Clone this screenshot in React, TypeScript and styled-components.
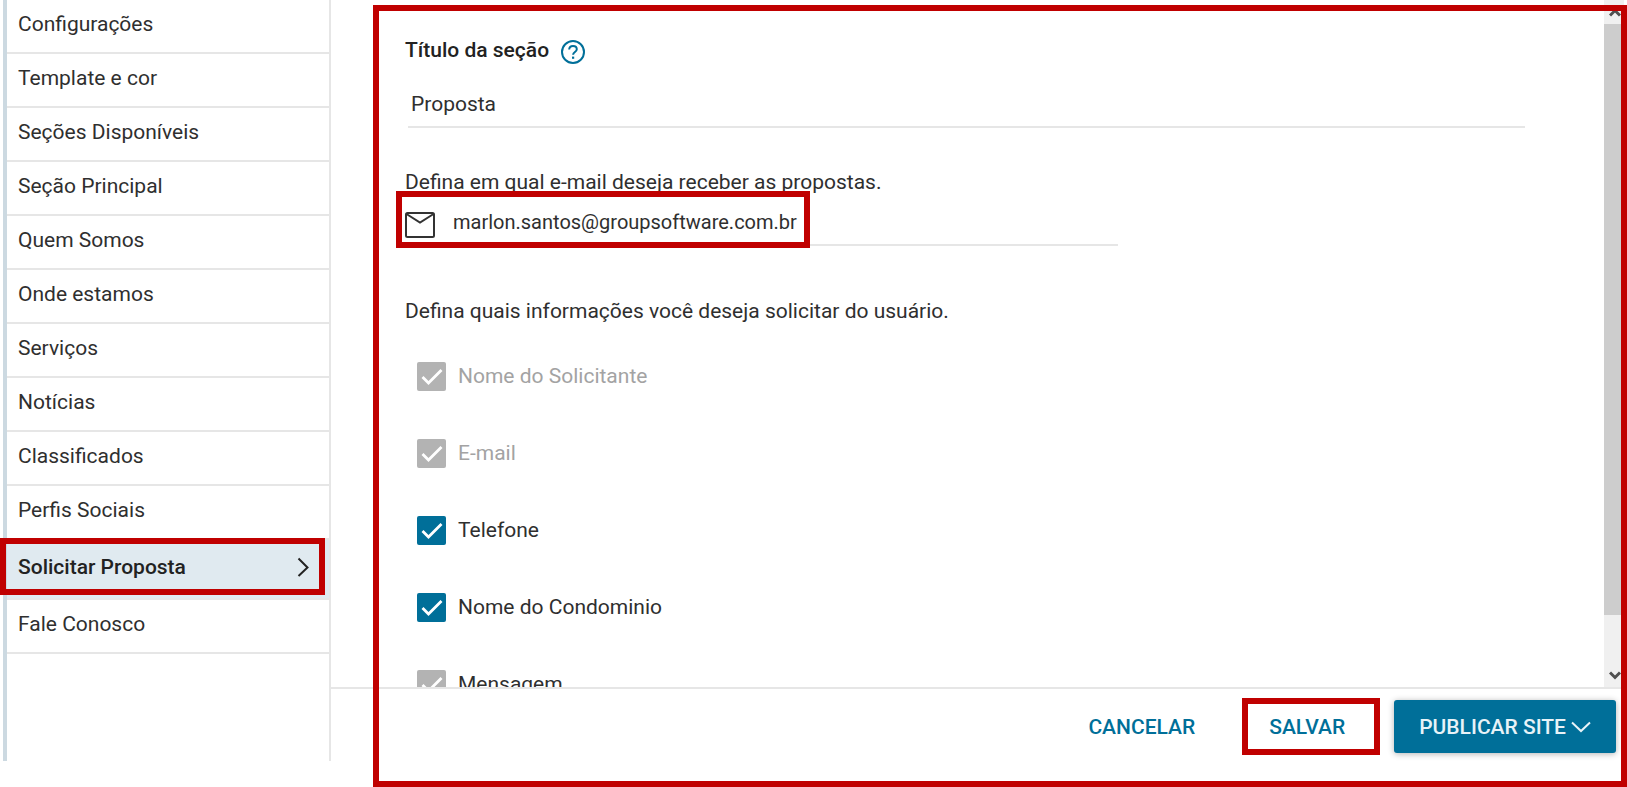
import React, { useId } from "react";
import styled, { createGlobalStyle, css } from "styled-components";

const colors = {
  text: "#2f2f2f",
  strong: "#222222",
  muted: "#a3a3a3",
  line: "#e6e6e6",
  primary: "#006f99",
  disabled: "#b3b3b3",
  selected: "#e0eaf0",
  edge: "#ccd9e1",
  highlight: "#c00000",
};

const GlobalStyle = createGlobalStyle`
  *, *::before, *::after { box-sizing: border-box; }
  body {
    margin: 0;
    background: #fff;
    color: ${colors.text};
    font-family: Roboto, "Liberation Sans", sans-serif;
    font-size: 21px;
    line-height: 28px;
  }
  button, input { font: inherit; color: inherit; }
`;

const Shell = styled.div`
  display: flex;
  height: 100vh;
  min-height: 700px;
  overflow: hidden;
`;

const Sidebar = styled.nav`
  flex: none;
  width: 328px;
  margin: 0 0 26px 3px;
  border-left: 4px solid ${colors.edge};
  border-right: 2px solid ${colors.line};
`;

const NavList = styled.ul`
  margin: 0;
  padding: 0;
  list-style: none;
`;

const NavItem = styled.li`
  position: relative;
`;

const NavLink = styled.a<{ $active: boolean }>`
  display: flex;
  align-items: center;
  justify-content: space-between;
  height: ${(p) => (p.$active ? 60 : 54)}px;
  padding: 0 20px 4px 11px;
  border-bottom: 2px solid ${colors.line};
  color: inherit;
  text-decoration: none;
  ${(p) =>
    p.$active &&
    css`
      background: ${colors.selected};
      color: ${colors.strong};
      font-weight: 500;
    `}
`;

const Highlight = styled.span<{ $inset: string }>`
  position: absolute;
  inset: ${(p) => p.$inset};
  z-index: 2;
  border: 6px solid ${colors.highlight};
  pointer-events: none;
`;

const Main = styled.main`
  position: relative;
  flex: 1;
  min-width: 0;
  display: flex;
  flex-direction: column;
`;

const ScrollArea = styled.div`
  flex: 1;
  min-height: 0;
  display: flex;
  padding-right: 3px;
`;

const Content = styled.form`
  flex: 1;
  min-width: 0;
  overflow-y: auto;
  scrollbar-width: none;
  padding: 36px 79px 0 74px;
`;

const TitleRow = styled.div`
  display: flex;
  align-items: flex-start;
  gap: 12px;
`;

const TitleLabel = styled.label`
  color: ${colors.strong};
  font-weight: 500;
`;

const HelpButton = styled.button`
  display: flex;
  padding: 4px 0 0;
  border: 0;
  background: none;
  color: ${colors.primary};
`;

const TextField = styled.input`
  display: block;
  width: 100%;
  height: 28px;
  padding: 0 3px;
  border: 0;
  outline: 0;
  background: none;
`;

const EmailField = styled(TextField)`
  flex: 1;
  min-width: 0;
  font-size: 20px;
`;

const TitleField = styled.div`
  margin: 18px 0 0 3px;
  padding: 8px 0;
  border-bottom: 2px solid ${colors.line};
`;

const Prompt = styled.label`
  display: block;
  margin-top: 40px;
`;

const EmailRow = styled.div`
  position: relative;
  display: flex;
  gap: 15px;
  max-width: 713px;
  height: 50px;
  padding-top: 12px;
  border-bottom: 2px solid ${colors.line};
`;

const MailIcon = styled.svg`
  flex: none;
  margin-top: 4px;
`;

const Options = styled.fieldset`
  margin: 51px 0 0;
  padding: 0 0 40px;
  border: 0;
`;

const Legend = styled.legend`
  padding: 0;
`;

const OptionList = styled.div`
  display: grid;
  gap: 48px;
  padding: 37px 0 0 12px;
`;

const OptionLabel = styled.label<{ $muted: boolean }>`
  display: flex;
  gap: 12px;
  height: 29px;
  color: ${(p) => (p.$muted ? colors.muted : colors.text)};
`;

const BoxCell = styled.span`
  display: grid;
  width: 29px;
  height: 29px;
  > * {
    grid-area: 1 / 1;
  }
`;

const Box = styled.input`
  appearance: none;
  width: 29px;
  height: 29px;
  margin: 0;
  border-radius: 2px;
  background: ${colors.primary};
  &:disabled {
    background: ${colors.disabled};
  }
`;

const Tick = styled.svg`
  pointer-events: none;
`;

const Scrollbar = styled.div`
  flex: none;
  width: 20px;
  display: flex;
  flex-direction: column;
  background: #f0f0f0;
`;

const Arrow = styled.span`
  flex: none;
  display: flex;
  align-items: center;
  justify-content: center;
  height: 24px;
  padding-left: 2px;
`;

const Track = styled.span`
  flex: 1;
`;

const Thumb = styled.span`
  display: block;
  height: 92.5%;
  background: #cdcdcd;
`;

const Footer = styled.footer`
  flex: none;
  display: flex;
  align-items: flex-start;
  justify-content: flex-end;
  height: 100px;
  padding: 11px 11px 0 0;
  border-top: 2px solid ${colors.line};
`;

const SaveSlot = styled.div`
  position: relative;
  margin: 0 24px;
`;

const Button = styled.button<{ $primary?: boolean }>`
  display: flex;
  align-items: center;
  justify-content: center;
  gap: 5px;
  height: 53px;
  padding: 0 25px;
  border: 0;
  border-radius: 3px;
  background: none;
  color: ${colors.primary};
  font-weight: 500;
  ${(p) =>
    p.$primary &&
    css`
      background: ${colors.primary};
      color: #e8f3f8;
      box-shadow: 0 1px 6px rgba(0, 0, 0, 0.3);
    `}
`;

const navItems = [
  "Configurações",
  "Template e cor",
  "Seções Disponíveis",
  "Seção Principal",
  "Quem Somos",
  "Onde estamos",
  "Serviços",
  "Notícias",
  "Classificados",
  "Perfis Sociais",
  "Solicitar Proposta",
  "Fale Conosco",
];
const activeItem = "Solicitar Proposta";

const options = [
  { label: "Nome do Solicitante", disabled: true, muted: true },
  { label: "E-mail", disabled: true, muted: true },
  { label: "Telefone", disabled: false, muted: false },
  { label: "Nome do Condominio", disabled: false, muted: false },
  { label: "Mensagem", disabled: true, muted: false },
];

function Option({ label, disabled, muted }: (typeof options)[number]) {
  const id = useId();
  return (
    <OptionLabel htmlFor={id} $muted={muted}>
      <BoxCell>
        <Box id={id} type="checkbox" defaultChecked disabled={disabled} />
        <Tick width="29" height="29" viewBox="0 0 29 29" fill="none" stroke="#fff" strokeWidth="2.8" aria-hidden="true">
          <path d="M5.5 15l6 6L24.5 8" />
        </Tick>
      </BoxCell>
      {label}
    </OptionLabel>
  );
}

export default function App() {
  return (
    <>
      <GlobalStyle />
      <Shell>
        <Sidebar>
          <NavList>
            {navItems.map((item) => {
              const active = item === activeItem;
              return (
                <NavItem key={item}>
                  <NavLink href="#" $active={active} aria-current={active ? "page" : undefined}>
                    {item}
                    {active && (
                      <svg width="12" height="20" viewBox="0 0 12 20" fill="none" stroke="#222" strokeWidth="2" aria-hidden="true">
                        <path d="M1.5 1.5L10.5 10.5L1.5 19" />
                      </svg>
                    )}
                  </NavLink>
                  {active && <Highlight $inset="-2px 4px 5px -7px" />}
                </NavItem>
              );
            })}
          </NavList>
        </Sidebar>
        <Main>
          <ScrollArea>
            <Content>
              <TitleRow>
                <TitleLabel htmlFor="section-title">Título da seção</TitleLabel>
                <HelpButton type="button" aria-label="Ajuda">
                  <svg width="24" height="24" viewBox="0 0 24 24" fill="none" stroke="currentColor" strokeWidth="2">
                    <circle cx="12" cy="12" r="11" />
                    <path d="M8.2 9.6c0-2.3 1.6-3.7 3.8-3.7s3.8 1.3 3.8 3.4c0 2.6-3.7 2.9-3.7 5.4" />
                    <path d="M12.1 16.6v2.2" strokeWidth="2.2" />
                  </svg>
                </HelpButton>
              </TitleRow>
              <TitleField>
                <TextField id="section-title" type="text" defaultValue="Proposta" />
              </TitleField>
              <Prompt htmlFor="proposal-email">Defina em qual e-mail deseja receber as propostas.</Prompt>
              <EmailRow>
                <MailIcon width="30" height="26" viewBox="0 0 30 26" fill="none" stroke="#333" strokeWidth="2" aria-hidden="true">
                  <rect x="1" y="1" width="28" height="24" rx="1.5" />
                  <path d="M1.5 2L15 10.5L28.5 2" />
                </MailIcon>
                <EmailField id="proposal-email" type="email" defaultValue="marlon.santos@groupsoftware.com.br" />
                <Highlight $inset="-5px 308px -4px -9px" />
              </EmailRow>
              <Options>
                <Legend>Defina quais informações você deseja solicitar do usuário.</Legend>
                <OptionList>
                  {options.map((option) => (
                    <Option key={option.label} {...option} />
                  ))}
                </OptionList>
              </Options>
            </Content>
            <Scrollbar aria-hidden="true">
              <Arrow>
                <svg width="12" height="9" viewBox="0 0 12 9" fill="none" stroke="#505050" strokeWidth="3">
                  <path d="M1 7.5L6 2.5L11 7.5" />
                </svg>
              </Arrow>
              <Track>
                <Thumb />
              </Track>
              <Arrow>
                <svg width="12" height="9" viewBox="0 0 12 9" fill="none" stroke="#505050" strokeWidth="3">
                  <path d="M1 1.5L6 6.5L11 1.5" />
                </svg>
              </Arrow>
            </Scrollbar>
          </ScrollArea>
          <Footer>
            <Button type="button">CANCELAR</Button>
            <SaveSlot>
              <Button type="button">SALVAR</Button>
              <Highlight $inset="-2px -10px -2px -2px" />
            </SaveSlot>
            <Button type="button" $primary>
              PUBLICAR SITE
              <svg width="20" height="12" viewBox="0 0 20 12" fill="none" stroke="currentColor" strokeWidth="2" aria-hidden="true">
                <path d="M1 1.5L10 10L19 1.5" />
              </svg>
            </Button>
          </Footer>
          <Highlight $inset="5px 0 0 42px" />
        </Main>
      </Shell>
    </>
  );
}
